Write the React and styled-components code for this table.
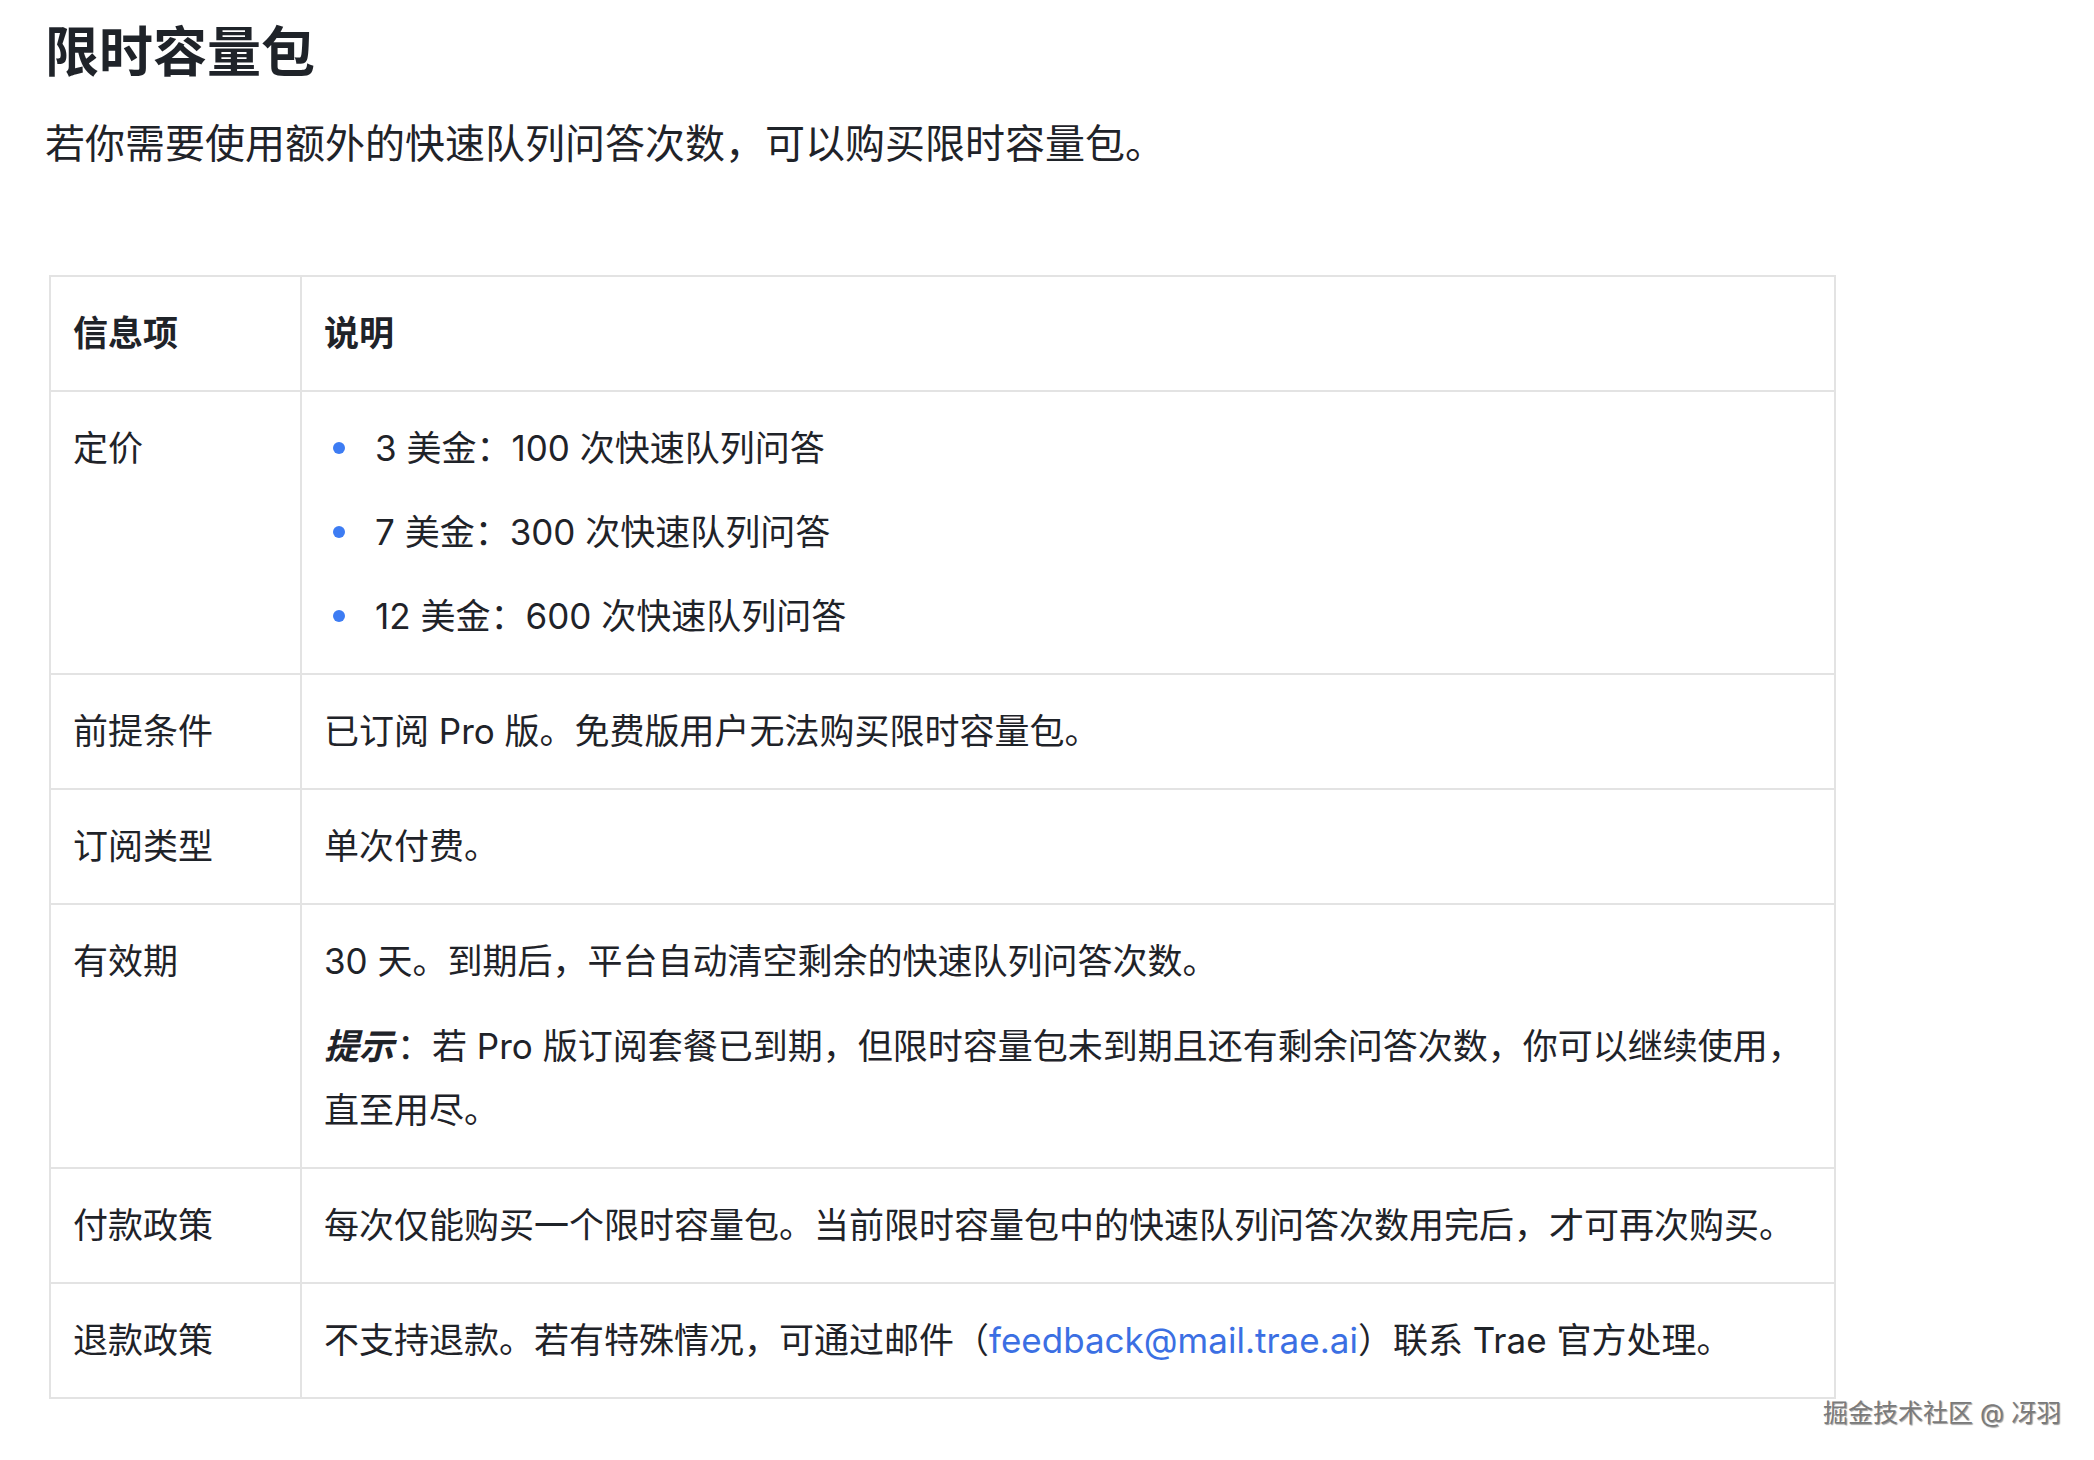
import React from 'react'
import styled, { createGlobalStyle } from 'styled-components'

const GlobalStyle = createGlobalStyle`
  html, body {
    margin: 0;
    padding: 0;
    background: #fff;
  }
  body {
    font-family: "Inter", "Noto Sans CJK SC", sans-serif;
    color: #1f2329;
  }
`

const Page = styled.div`
  position: relative;
  width: 2094px;
  min-height: 1460px;
  padding: 17px 0 0 45px;
  box-sizing: border-box;
`

const Title = styled.h1`
  margin: 0;
  font-size: 54px;
  line-height: 72px;
  font-weight: 700;
  color: #1f2329;
`

const Lead = styled.p`
  margin: 25px 0 0;
  font-size: 40px;
  line-height: 60px;
  color: #1f2329;
`

const Table = styled.table`
  margin: 101px 0 0 4px;
  width: 1787px;
  border-collapse: collapse;
  table-layout: fixed;
  font-size: 35px;
  line-height: 64px;
`

const Cell = styled.td`
  border: 2px solid #e3e3e3;
  padding: 24px 22px 25px;
  vertical-align: top;
  text-align: left;
  font-weight: ${p => (p.$head ? 700 : 400)};
  width: ${p => (p.$key ? '205px' : 'auto')};
`

const Para = styled.p`
  margin: 0;
  & + & {
    margin-top: 21px;
  }
`

const Bullets = styled.ul`
  margin: 0;
  padding: 0;
  list-style: none;
`

const Bullet = styled.li`
  display: flex;
  align-items: center;
  & + & {
    margin-top: 20px;
  }
  &::before {
    content: '';
    flex: none;
    width: 12px;
    height: 12px;
    margin: 0 30px 0 9px;
    border-radius: 50%;
    background: #3d7cf3;
  }
`

const Hint = styled.strong`
  font-weight: 700;
  font-style: italic;
  padding-right: 3px;
`

const Link = styled.a`
  color: #3b6fe3;
  text-decoration: none;
`

const Watermark = styled.div`
  position: absolute;
  left: 1823px;
  top: 1395px;
  font-size: 25px;
  line-height: 36px;
  color: #7a7a7a;
  text-shadow: -1px -1px 0 #fff, 1px 1px 1px #9a9a9a;
  white-space: nowrap;
`

const rows = [
  {
    key: '前提条件',
    body: <Para>已订阅 Pro 版。免费版用户无法购买限时容量包。</Para>,
  },
  {
    key: '订阅类型',
    body: <Para>单次付费。</Para>,
  },
  {
    key: '有效期',
    body: (
      <>
        <Para>30 天。到期后，平台自动清空剩余的快速队列问答次数。</Para>
        <Para>
          <Hint>提示</Hint>：若 Pro 版订阅套餐已到期，但限时容量包未到期且还有剩余问答次数，你可以继续使用，直至用尽。
        </Para>
      </>
    ),
  },
  {
    key: '付款政策',
    body: <Para>每次仅能购买一个限时容量包。当前限时容量包中的快速队列问答次数用完后，才可再次购买。</Para>,
  },
  {
    key: '退款政策',
    body: (
      <Para>
        不支持退款。若有特殊情况，可通过邮件（<Link href="#">feedback@mail.trae.ai</Link>）联系 Trae 官方处理。
      </Para>
    ),
  },
]

const prices = [
  '3 美金：100 次快速队列问答',
  '7 美金：300 次快速队列问答',
  '12 美金：600 次快速队列问答',
]

const App = () => {
  return (
    <Page>
      <GlobalStyle />
      <Title>限时容量包</Title>
      <Lead>若你需要使用额外的快速队列问答次数，可以购买限时容量包。</Lead>
      <Table>
        <thead>
          <tr>
            <Cell as="th" $head $key>信息项</Cell>
            <Cell as="th" $head>说明</Cell>
          </tr>
        </thead>
        <tbody>
          <tr>
            <Cell $key>定价</Cell>
            <Cell>
              <Bullets>
                {prices.map(p => (
                  <Bullet key={p}>{p}</Bullet>
                ))}
              </Bullets>
            </Cell>
          </tr>
          {rows.map(r => (
            <tr key={r.key}>
              <Cell $key>{r.key}</Cell>
              <Cell>{r.body}</Cell>
            </tr>
          ))}
        </tbody>
      </Table>
      <Watermark>掘金技术社区 @ 冴羽</Watermark>
    </Page>
  )
}

export default App
